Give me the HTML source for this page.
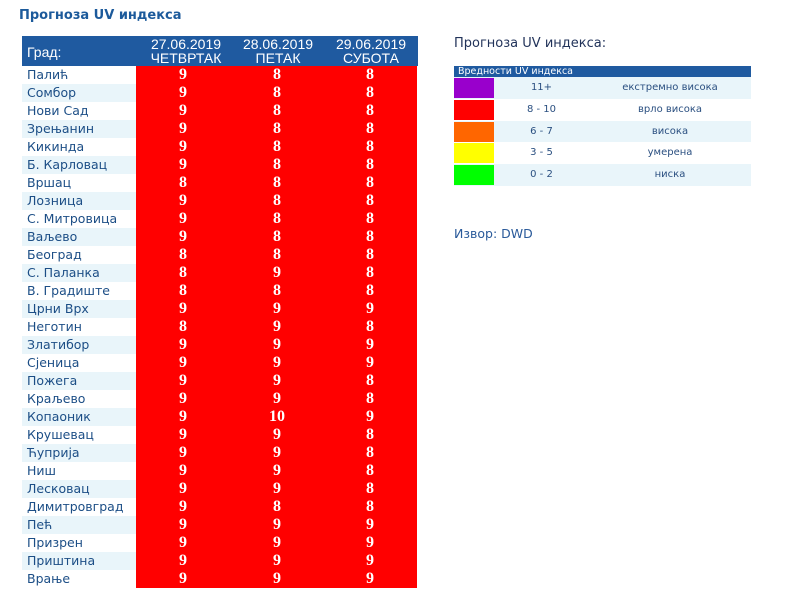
<!DOCTYPE html>
<html><head><meta charset="utf-8"><style>
body{margin:0;width:790px;height:598px;background:#fff;font-family:Verdana,"DejaVu Sans",sans-serif;position:relative;overflow:hidden}
.t{position:absolute;left:19px;top:8px;font-size:13px;font-weight:bold;color:#1c5a9b;font-family:"DejaVu Sans",sans-serif}
#red{position:absolute;left:136px;top:66px;width:281px;height:522px;background:#ff0000}
#hd{position:absolute;left:22px;top:36px;width:396px;height:30px;background:#1f5aa0;color:#fff;font-family:"Liberation Sans",sans-serif;font-size:14px}
#hd div{position:absolute;text-align:center;line-height:14px}
.row{position:absolute;left:22px;width:396px;height:18px}
.city{position:absolute;left:0;width:114px;height:18px;font-size:12.5px;color:#1c4e86;line-height:18px;padding-left:5px;box-sizing:border-box;font-family:"DejaVu Sans",sans-serif}
.v{position:absolute;width:60px;text-align:center;color:#fff;font:bold 16px "Liberation Serif",serif;line-height:18px}
.lt{position:absolute;left:454px;top:36px;font-size:13px;color:#22335a;font-family:"DejaVu Sans",sans-serif}
#lg{position:absolute;left:454px;top:66px;width:297px}
#lg .h{height:11px;background:#1f5aa0;color:#fff;font-size:9.5px;line-height:11px;padding-left:4px;font-family:"DejaVu Sans",sans-serif}
#lg .r{height:21.8px;position:relative;font-size:10px;color:#2a4f80;font-family:"DejaVu Sans",sans-serif;line-height:22px}
#lg .s{position:absolute;left:0;top:1px;width:40px;height:20px}
#lg .a{position:absolute;left:40px;width:95px;text-align:center}
#lg .b{position:absolute;left:135px;width:162px;text-align:center}
.src{position:absolute;left:454px;top:226px;font-size:12.5px;color:#2a5a9a;font-family:"DejaVu Sans",sans-serif}
</style></head><body>
<div class="t">Прогноза UV индекса</div>
<div id="hd">
<div style="left:5px;top:9px;text-align:left">Град:</div>
<div style="left:118px;top:1px;width:92px">27.06.2019<br>ЧЕТВРТАК</div>
<div style="left:210px;top:1px;width:92px">28.06.2019<br>ПЕТАК</div>
<div style="left:303px;top:1px;width:92px">29.06.2019<br>СУБОТА</div>
</div>
<div id="red"></div>
<div id="rows"></div>
<div class="lt">Прогноза UV индекса:</div>
<div id="lg">
<div class="h">Вредности UV индекса</div>
<div class="r" style="background:#e9f5fa"><div class="s" style="background:#9900cc"></div><div class="a">11+</div><div class="b">екстремно висока</div></div>
<div class="r"><div class="s" style="background:#ff0000"></div><div class="a">8 - 10</div><div class="b">врло висока</div></div>
<div class="r" style="background:#e9f5fa"><div class="s" style="background:#ff6600"></div><div class="a">6 - 7</div><div class="b">висока</div></div>
<div class="r"><div class="s" style="background:#ffff00"></div><div class="a">3 - 5</div><div class="b">умерена</div></div>
<div class="r" style="background:#e9f5fa"><div class="s" style="background:#00ff00"></div><div class="a">0 - 2</div><div class="b">ниска</div></div>
</div>
<div class="src">Извор: DWD</div>
<script>
var d=[["Палић",9,8,8],["Сомбор",9,8,8],["Нови Сад",9,8,8],["Зрењанин",9,8,8],["Кикинда",9,8,8],["Б. Карловац",9,8,8],["Вршац",8,8,8],["Лозница",9,8,8],["С. Митровица",9,8,8],["Ваљево",9,8,8],["Београд",8,8,8],["С. Паланка",8,9,8],["В. Градиште",8,8,8],["Црни Врх",9,9,9],["Неготин",8,9,8],["Златибор",9,9,9],["Сјеница",9,9,9],["Пожега",9,9,8],["Краљево",9,9,8],["Копаоник",9,10,9],["Крушевац",9,9,8],["Ћуприја",9,9,8],["Ниш",9,9,8],["Лесковац",9,9,8],["Димитровград",9,8,8],["Пећ",9,9,9],["Призрен",9,9,9],["Приштина",9,9,9],["Врање",9,9,9]];
var h="";d.forEach(function(r,i){var y=66+i*18;h+='<div class="row" style="top:'+y+'px"><div class="city" style="background:'+(i%2?'#e9f5fa':'#fff')+'">'+r[0]+'</div><div class="v" style="left:131px">'+r[1]+'</div><div class="v" style="left:225px">'+r[2]+'</div><div class="v" style="left:318px">'+r[3]+'</div></div>';});
document.getElementById("rows").innerHTML=h;
</script>
</body></html>
